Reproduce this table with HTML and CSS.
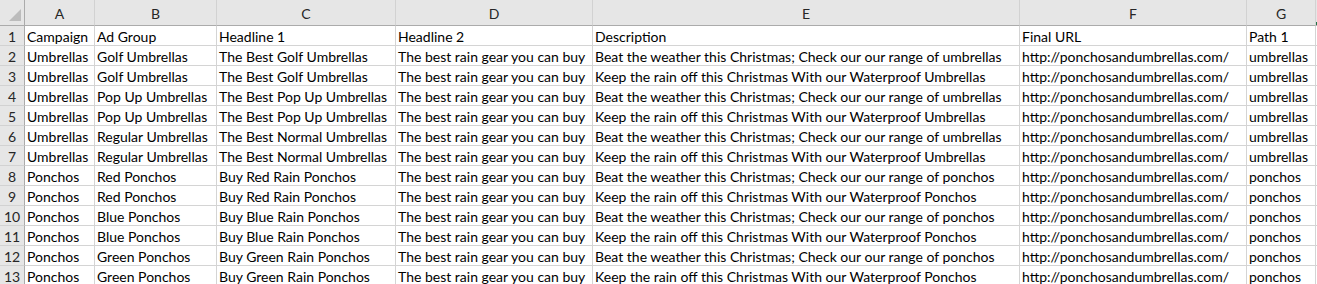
FILE: index.html
```html
<!DOCTYPE html>
<html>
<head>
<meta charset="utf-8">
<link rel="stylesheet" href="styles.css">
</head>
<body>
<div class="sheet">
  <div class="corner"><span class="tri"></span></div>
  <div class="colhead">A</div><div class="colhead">B</div><div class="colhead">C</div><div class="colhead">D</div><div class="colhead">E</div><div class="colhead">F</div><div class="colhead">G</div><div class="colhead colhead-h"><span class="sel"></span></div>

  <div class="rowhead">1</div><div class="cell">Campaign</div><div class="cell">Ad Group</div><div class="cell">Headline 1</div><div class="cell">Headline 2</div><div class="cell">Description</div><div class="cell">Final URL</div><div class="cell">Path 1</div><div class="cell"></div>

  <div class="rowhead">2</div><div class="cell">Umbrellas</div><div class="cell">Golf Umbrellas</div><div class="cell">The Best Golf Umbrellas</div><div class="cell">The best rain gear you can buy</div><div class="cell">Beat the weather this Christmas; Check our our range of umbrellas</div><div class="cell">http://ponchosandumbrellas.com/</div><div class="cell">umbrellas</div><div class="cell"></div>

  <div class="rowhead">3</div><div class="cell">Umbrellas</div><div class="cell">Golf Umbrellas</div><div class="cell">The Best Golf Umbrellas</div><div class="cell">The best rain gear you can buy</div><div class="cell">Keep the rain off this Christmas With our Waterproof Umbrellas</div><div class="cell">http://ponchosandumbrellas.com/</div><div class="cell">umbrellas</div><div class="cell"></div>

  <div class="rowhead">4</div><div class="cell">Umbrellas</div><div class="cell">Pop Up Umbrellas</div><div class="cell">The Best Pop Up Umbrellas</div><div class="cell">The best rain gear you can buy</div><div class="cell">Beat the weather this Christmas; Check our our range of umbrellas</div><div class="cell">http://ponchosandumbrellas.com/</div><div class="cell">umbrellas</div><div class="cell"></div>

  <div class="rowhead">5</div><div class="cell">Umbrellas</div><div class="cell">Pop Up Umbrellas</div><div class="cell">The Best Pop Up Umbrellas</div><div class="cell">The best rain gear you can buy</div><div class="cell">Keep the rain off this Christmas With our Waterproof Umbrellas</div><div class="cell">http://ponchosandumbrellas.com/</div><div class="cell">umbrellas</div><div class="cell"></div>

  <div class="rowhead">6</div><div class="cell">Umbrellas</div><div class="cell">Regular Umbrellas</div><div class="cell">The Best Normal Umbrellas</div><div class="cell">The best rain gear you can buy</div><div class="cell">Beat the weather this Christmas; Check our our range of umbrellas</div><div class="cell">http://ponchosandumbrellas.com/</div><div class="cell">umbrellas</div><div class="cell"></div>

  <div class="rowhead">7</div><div class="cell">Umbrellas</div><div class="cell">Regular Umbrellas</div><div class="cell">The Best Normal Umbrellas</div><div class="cell">The best rain gear you can buy</div><div class="cell">Keep the rain off this Christmas With our Waterproof Umbrellas</div><div class="cell">http://ponchosandumbrellas.com/</div><div class="cell">umbrellas</div><div class="cell"></div>

  <div class="rowhead">8</div><div class="cell">Ponchos</div><div class="cell">Red Ponchos</div><div class="cell">Buy Red Rain Ponchos</div><div class="cell">The best rain gear you can buy</div><div class="cell">Beat the weather this Christmas; Check our our range of ponchos</div><div class="cell">http://ponchosandumbrellas.com/</div><div class="cell">ponchos</div><div class="cell"></div>

  <div class="rowhead">9</div><div class="cell">Ponchos</div><div class="cell">Red Ponchos</div><div class="cell">Buy Red Rain Ponchos</div><div class="cell">The best rain gear you can buy</div><div class="cell">Keep the rain off this Christmas With our Waterproof Ponchos</div><div class="cell">http://ponchosandumbrellas.com/</div><div class="cell">ponchos</div><div class="cell"></div>

  <div class="rowhead">10</div><div class="cell">Ponchos</div><div class="cell">Blue Ponchos</div><div class="cell">Buy Blue Rain Ponchos</div><div class="cell">The best rain gear you can buy</div><div class="cell">Beat the weather this Christmas; Check our our range of ponchos</div><div class="cell">http://ponchosandumbrellas.com/</div><div class="cell">ponchos</div><div class="cell"></div>

  <div class="rowhead">11</div><div class="cell">Ponchos</div><div class="cell">Blue Ponchos</div><div class="cell">Buy Blue Rain Ponchos</div><div class="cell">The best rain gear you can buy</div><div class="cell">Keep the rain off this Christmas With our Waterproof Ponchos</div><div class="cell">http://ponchosandumbrellas.com/</div><div class="cell">ponchos</div><div class="cell"></div>

  <div class="rowhead">12</div><div class="cell">Ponchos</div><div class="cell">Green Ponchos</div><div class="cell">Buy Green Rain Ponchos</div><div class="cell">The best rain gear you can buy</div><div class="cell">Beat the weather this Christmas; Check our our range of ponchos</div><div class="cell">http://ponchosandumbrellas.com/</div><div class="cell">ponchos</div><div class="cell"></div>

  <div class="rowhead">13</div><div class="cell">Ponchos</div><div class="cell">Green Ponchos</div><div class="cell">Buy Green Rain Ponchos</div><div class="cell">The best rain gear you can buy</div><div class="cell">Keep the rain off this Christmas With our Waterproof Ponchos</div><div class="cell">http://ponchosandumbrellas.com/</div><div class="cell">ponchos</div><div class="cell"></div>
</div>
</body>
</html>
```

FILE: styles.css
```css
html, body {
  margin: 0;
  padding: 0;
  background: #ffffff;
}

.sheet {
  display: grid;
  grid-template-columns: 25px 70px 122px 179px 197px 427px 227px 69px 1fr;
  grid-template-rows: 26px;
  grid-auto-rows: 20px;
  width: 1317px;
  font-family: Lato, "Liberation Sans", sans-serif;
  font-size: 14px;
  color: #000000;
  overflow: hidden;
}

.corner,
.colhead,
.rowhead,
.cell {
  box-sizing: border-box;
  white-space: nowrap;
  overflow: hidden;
}

.corner {
  position: relative;
  background: #e6e6e6;
  border-right: 1px solid #ababab;
  border-bottom: 1px solid #ababab;
}

.tri {
  position: absolute;
  left: 9px;
  top: 9px;
  width: 12px;
  height: 12px;
  background: #bcbcbc;
  clip-path: polygon(100% 0, 100% 100%, 0 100%);
}

.colhead {
  position: relative;
  background: #e6e6e6;
  border-right: 1px solid #d2d2d2;
  border-bottom: 1px solid #ababab;
  text-align: center;
  line-height: 28px;
  color: #262626;
}

.sel {
  position: absolute;
  left: 0;
  bottom: 0;
  width: 2px;
  height: 3px;
  background: #217346;
}

.rowhead {
  background: #e6e6e6;
  border-right: 1px solid #ababab;
  border-bottom: 1px solid #d2d2d2;
  text-align: center;
  line-height: 22px;
  color: #262626;
}

.cell {
  border-right: 1px solid #d4d4d4;
  border-bottom: 1px solid #d4d4d4;
  padding-left: 2px;
  line-height: 22px;
}
```
